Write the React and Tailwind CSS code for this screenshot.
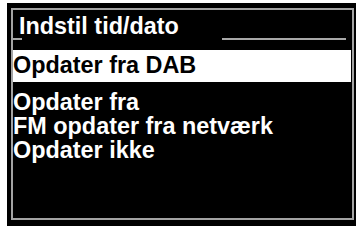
import React from "react";

const items = ["Opdater fra", "FM opdater fra netværk", "Opdater ikke"];

export default function App() {
  return (
    <div className="w-[357px] h-[226px] bg-white pl-[7px] pt-[3px] overflow-hidden">
      <div
        className="w-[349px] h-[223px] bg-black pl-[4px] pr-[2px] pt-[5px] pb-[6px]"
        style={{ fontFamily: '"Liberation Sans", Arial, sans-serif' }}
      >
        {/* lcd frame */}
        <div className="h-full border-2 border-[#a3a3a3] flex flex-col">
          <div className="pt-[5px] pl-[6px] h-[28px] text-[23.4px] leading-[23px] font-bold text-white">
            Indstil tid/dato
          </div>
          <div className="flex h-[2px]">
            <div className="w-[9px] bg-[#a8a8a8]"></div>
            <div className="w-[200px]"></div>
            <div className="w-[124px] bg-[#a8a8a8]"></div>
          </div>
          <div className="mt-[10px] mr-[1px] h-[32px] bg-white pt-[3px] text-[23.4px] leading-[24px] font-bold text-black">
            Opdater fra DAB
          </div>
          <div className="mt-[8px] flex flex-col">
            {items.map((label) => (
              <div
                key={label}
                className="text-[23.4px] leading-[24px] font-bold text-white"
              >
                {label}
              </div>
            ))}
          </div>
        </div>
      </div>
    </div>
  );
}
